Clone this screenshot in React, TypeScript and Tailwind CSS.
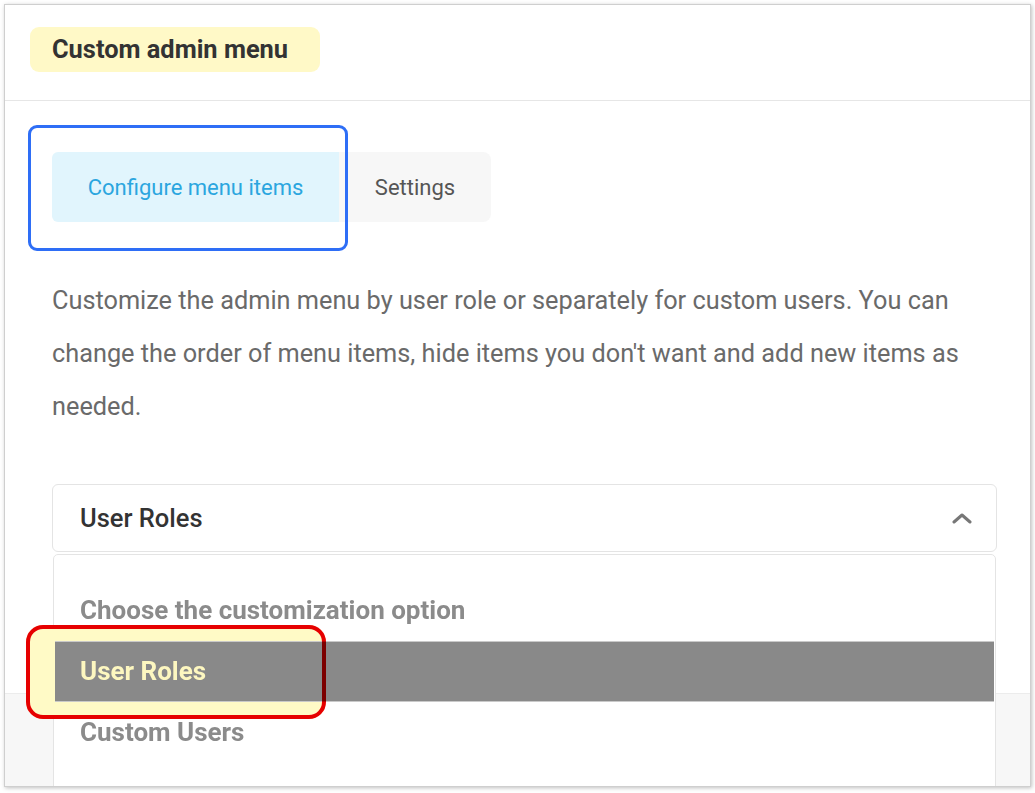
import React from "react";

const font = { fontFamily: "Roboto, 'Noto Sans', sans-serif" };

function Tabs() {
    return (
        <div className="relative flex h-[70px]">
            <div className="flex w-[287px] items-center justify-center rounded-l-[6px] bg-[#e1f5fd] text-[22px] text-[#2ba6df]">
                Configure menu items
            </div>
            <div className="flex w-[152px] items-center justify-center rounded-r-[8px] bg-[#f7f7f7] text-[22px] text-[#555]">
                Settings
            </div>
            {/* blue annotation */}
            <div className="pointer-events-none absolute left-[-24px] top-[-27px] h-[126px] w-[320px] rounded-[9px] border-[3px] border-[#2e6ef6]" />
        </div>
    );
}

function Dropdown() {
    return (
        <div className="absolute left-0 right-0 top-[69px] z-10 h-[260px] rounded-t-[5px] border border-[#e4e4e4] bg-white pt-[24px]">
            {/* yellow highlighter, sits under the selected row */}
            <div className="absolute left-[-28px] top-[70px] h-[94px] w-[300px] rounded-[17px] bg-[#fffac6]" />
            <div className="relative flex h-[62px] items-center px-[26px] text-[26px] font-bold text-[#8b8b8b]">
                Choose the customization option
            </div>
            <div className="relative z-[1] mx-px flex h-[61px] items-center border-y border-[#c9c9c9] bg-[#898989] px-[25px] text-[26px] font-bold text-[#fdf7c0]">
                User Roles
            </div>
            <div className="relative flex h-[61px] items-center px-[26px] text-[26px] font-bold text-[#8b8b8b]">
                Custom Users
            </div>
            {/* red annotation */}
            <div className="absolute left-[-28px] top-[70px] z-[2] h-[94px] w-[300px] rounded-[17px] border-[4px] border-[#e60000] mix-blend-multiply" />
        </div>
    );
}

export default function App() {
    return (
        <div className="min-h-screen bg-white p-[4px]" style={font}>
            <div className="flex h-[783px] w-[1027px] flex-col overflow-hidden border border-[#cfcfcf] bg-white shadow-[1px_1px_4px_rgba(0,0,0,0.25)]">
                <div className="h-[96px] shrink-0 border-b border-[#e6e6e6] pl-[25px] pt-[22px]">
                    <div className="flex h-[45px] w-[290px] items-center rounded-[9px] bg-[#fff9c7] pl-[22px] text-[25.4px] font-bold text-[#333]">
                        Custom admin menu
                    </div>
                </div>

                <div className="h-[592px] shrink-0 pl-[47px] pr-[33px] pt-[51px]">
                    <Tabs />
                    <p className="mt-[52px] text-[25.3px] leading-[53px] text-[#6a6a6a]">
                        Customize the admin menu by user role or separately for custom users. You can change the order of menu items, hide items you don't want and add new items as needed.
                    </p>
                    <div className="relative mt-[51px] flex h-[68px] items-center justify-between rounded-[6px] border border-[#e4e4e4] pl-[27px] pr-[24px]">
                        <span className="text-[25.5px] font-medium text-[#333]">User Roles</span>
                        <svg width="20" height="12" viewBox="0 0 20 12" fill="none">
                            <path d="M2 10 L10 3 L18 10" stroke="#777" strokeWidth="3" strokeLinecap="round" strokeLinejoin="round" />
                        </svg>
                        <Dropdown />
                    </div>
                </div>

                <div className="flex-1 border-t border-[#ececec] bg-[#f7f7f7]" />
            </div>
        </div>
    );
}
